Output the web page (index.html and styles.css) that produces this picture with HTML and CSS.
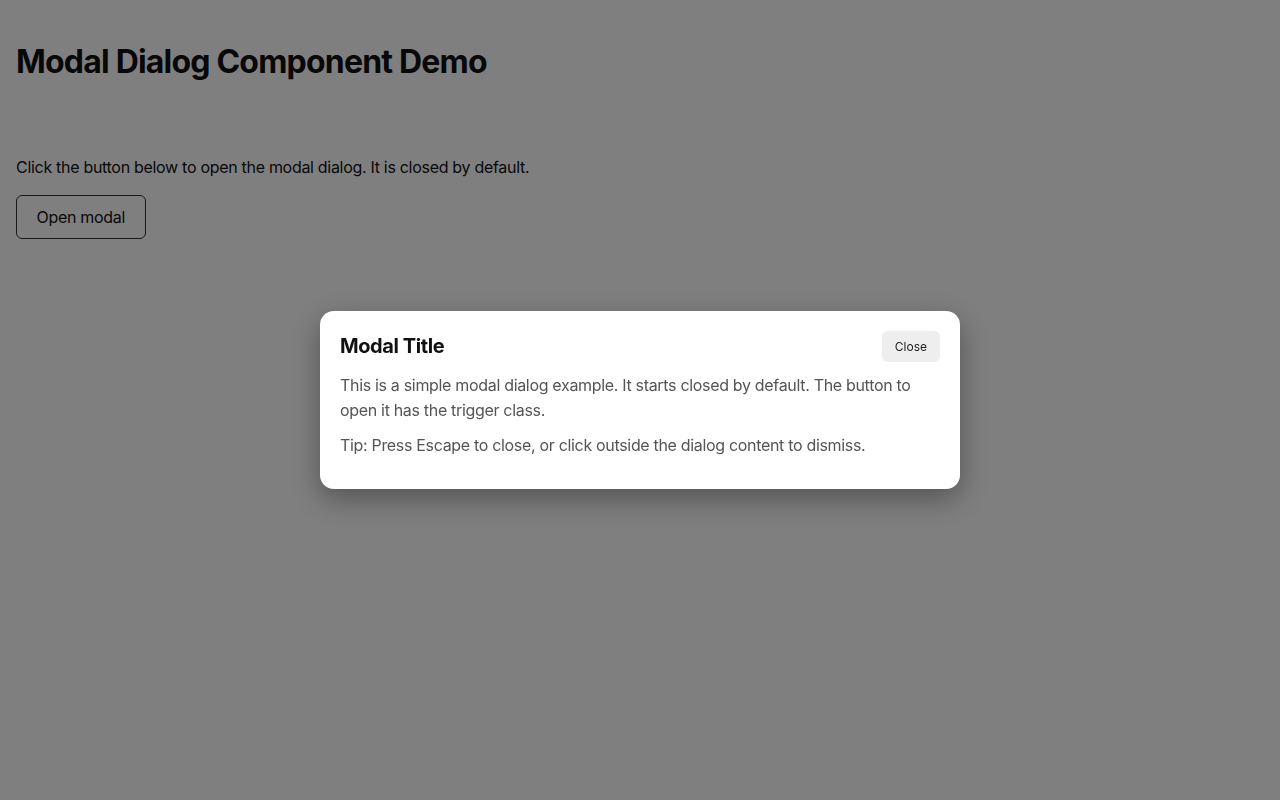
FILE: index.html
```html
<!DOCTYPE html>
<html lang="en">
<head>
<meta charset="utf-8">
<title>Modal Dialog Component Demo</title>
<link rel="stylesheet" href="styles.css">
</head>
<body>
<main class="page">
  <h1 class="page-title">Modal Dialog Component Demo</h1>
  <section class="demo">
    <p class="intro">Click the button below to open the modal dialog. It is closed by default.</p>
    <button class="trigger" type="button">Open modal</button>
  </section>
</main>
<div class="overlay">
  <div class="modal" role="dialog" aria-labelledby="modal-title">
    <div class="modal-header">
      <h2 class="modal-title" id="modal-title">Modal Title</h2>
      <button class="close-btn" type="button">Close</button>
    </div>
    <p class="modal-text">This is a simple modal dialog example. It starts closed by default. The button to open it has the trigger class.</p>
    <p class="modal-text">Tip: Press Escape to close, or click outside the dialog content to dismiss.</p>
  </div>
</div>
</body>
</html>
```
FILE: styles.css
```css
* { box-sizing: border-box; }
html, body { height: 100%; }
body {
  margin: 0;
  background: #ffffff;
  color: #111111;
  font-family: Inter, "Noto Sans", sans-serif;
}
.page {
  padding: 16px;
}
.page-title {
  margin: 27px 0 0;
  font-size: 32px;
  font-weight: 700;
  line-height: 1.21;
  letter-spacing: -0.8px;
}
.demo {
  margin-top: 76px;
}
.intro {
  margin: 0 0 18px;
  font-size: 16px;
  line-height: 1.21;
  letter-spacing: -0.3px;
}
.trigger {
  font-family: inherit;
  font-size: 16px;
  letter-spacing: -0.3px;
  white-space: nowrap;
  color: #111;
  background: #fff;
  border: 1px solid #333;
  border-radius: 6px;
  padding: 0 19.5px;
  height: 44px;
}
.overlay {
  position: fixed;
  inset: 0;
  background: rgba(0, 0, 0, 0.5);
  display: flex;
  align-items: center;
  justify-content: center;
}
.modal {
  width: 640px;
  background: #fff;
  border-radius: 14px;
  padding: 20px;
  box-shadow: 0 10px 30px rgba(0, 0, 0, 0.35);
}
.modal-header {
  display: flex;
  align-items: center;
  justify-content: space-between;
}
.modal-title {
  margin: 0;
  font-size: 20px;
  font-weight: 700;
  letter-spacing: -0.4px;
  color: #111;
}
.close-btn {
  font-family: inherit;
  font-size: 12px;
  color: #222;
  background: #eeeeee;
  border: none;
  border-radius: 6px;
  height: 31px;
  padding: 0 13px;
}
.modal-text {
  margin: 11px 0;
  font-size: 16px;
  line-height: 1.55;
  letter-spacing: -0.32px;
  color: #555;
}
```
